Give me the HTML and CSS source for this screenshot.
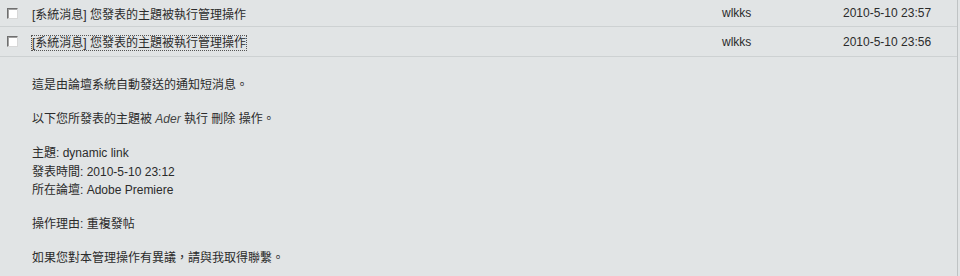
FILE: index.html
```html
<!DOCTYPE html>
<html lang="zh-Hant">
<head>
<meta charset="utf-8">
<title>短消息</title>
<link rel="stylesheet" href="styles.css">
</head>
<body>
<div class="panel">
  <div class="row">
    <span class="cb"></span>
    <span class="title">[系統消息] 您發表的主題被執行管理操作</span>
    <span class="author">wlkks</span>
    <span class="date">2010-5-10 23:57</span>
  </div>
  <div class="row">
    <span class="cb"></span>
    <span class="title"><span class="focus">[系統消息] 您發表的主題被執行管理操作</span></span>
    <span class="author">wlkks</span>
    <span class="date">2010-5-10 23:56</span>
  </div>
  <div class="message">
    <p>這是由論壇系統自動發送的通知短消息。</p>
    <p>以下您所發表的主題被 <em class="who">Ader</em> 執行 刪除 操作。</p>
    <p>主題: dynamic link<br>發表時間: 2010-5-10 23:12<br>所在論壇: Adobe Premiere</p>
    <p>操作理由: 重複發帖</p>
    <p>如果您對本管理操作有異議，請與我取得聯繫。</p>
  </div>
</div>
</body>
</html>
```

FILE: styles.css
```css
html, body {
  margin: 0;
  padding: 0;
  background: #e1e4e5;
}
body {
  font-family: "Liberation Sans", "Noto Sans CJK TC", sans-serif;
  font-size: 12px;
  color: #2b2b2b;
  width: 960px;
  height: 276px;
  overflow: hidden;
}
.panel {
  width: 958px;
  height: 276px;
  border-right: 1px solid #bfc3c4;
  box-sizing: border-box;
}
.row {
  display: grid;
  grid-template-columns: 32px 690px 121px 1fr;
  align-items: center;
  height: 27px;
  border-bottom: 1px solid #cdd1d2;
  box-sizing: border-box;
}
.row + .row {
  height: 30px;
}
.cb {
  width: 11px;
  height: 11px;
  margin-left: 7px;
  background: #fff;
  border-top: 1px solid #6f6f6f;
  border-left: 1px solid #6f6f6f;
  border-right: 1px solid #d8d8d8;
  border-bottom: 1px solid #d8d8d8;
  box-shadow: inset 1px 1px 0 #a0a0a0;
  box-sizing: border-box;
}
.title {
  white-space: nowrap;
}
.focus {
  outline: 1px dotted #555;
  outline-offset: 0;
}
.author, .date {
  white-space: nowrap;
}
.message {
  padding: 19px 0 0 32px;
}
.message p {
  margin: 0 0 15.5px;
  line-height: 18.5px;
}
.who {
  font-style: italic;
  color: #444;
}
```
